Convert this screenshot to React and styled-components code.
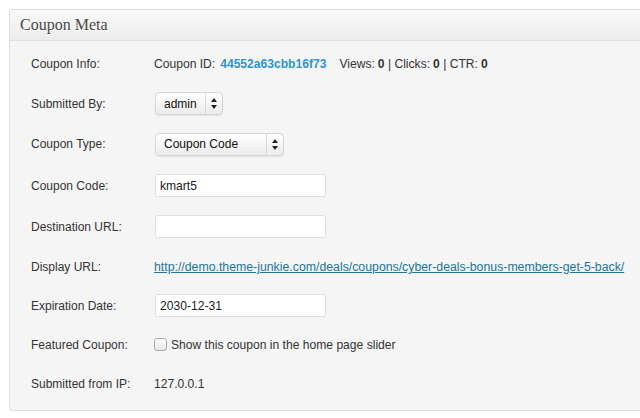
import React from 'react';
import styled, { createGlobalStyle } from 'styled-components';

const GlobalStyle = createGlobalStyle`
  html, body {
    margin: 0;
    padding: 0;
    background: #fff;
  }
  body {
    font-family: "Liberation Sans", Arial, sans-serif;
    font-size: 12px;
    color: #333;
  }
`;

const Page = styled.div`
  width: 640px;
  height: 418px;
  overflow: hidden;
  padding: 9px 0 0 9px;
  box-sizing: border-box;
`;

const Box = styled.div`
  width: 650px;
  border: 1px solid #dfdfdf;
  border-radius: 3px;
  background: #f5f5f5;
  box-shadow: inset 0 1px 0 #fff;
`;

const Header = styled.div`
  height: 30px;
  display: flex;
  align-items: center;
  padding-left: 10px;
  background: linear-gradient(to bottom, #f9f9f9, #ececec);
  border-bottom: 1px solid #dfdfdf;
  font-family: "Liberation Serif", Georgia, serif;
  font-size: 16px;
  color: #464646;
  text-shadow: 0 1px 0 #fff;
`;

const Body = styled.div`
  padding: 3px 0 8px 21px;
  display: flex;
  flex-direction: column;
`;

const Row = styled.div`
  display: grid;
  grid-template-columns: 123px 1fr;
  align-items: center;
  height: ${p => p.h}px;
`;

const Label = styled.div`
  color: #333;
`;

const Value = styled.div`
  display: flex;
  align-items: center;
  white-space: nowrap;
  font-size: 12.1px;
`;

const CouponId = styled.span`
  color: #2a95cf;
  font-weight: bold;
  margin-left: 5px;
  margin-right: 13px;
`;

const B = styled.b`
  margin-left: 3px;
`;

const Select = styled.div`
  display: flex;
  align-items: stretch;
  height: 23px;
  width: ${p => p.w}px;
  margin-left: 1px;
  border: 1px solid #d6d6d6;
  border-radius: 4px;
  background: linear-gradient(to bottom, #ffffff, #ececec);
  box-shadow: 0 1px 1px rgba(0, 0, 0, 0.08);
  box-sizing: border-box;
  color: #111;
  font-size: 12px;
`;

const SelectText = styled.div`
  flex: 1;
  display: flex;
  align-items: center;
  padding-left: 8px;
`;

const Arrows = styled.div`
  width: 16px;
  border-left: 1px solid #dadada;
  display: flex;
  align-items: center;
  justify-content: center;
`;

const Input = styled.div`
  width: 171px;
  height: 23px;
  margin-left: 1px;
  box-sizing: border-box;
  border: 1px solid #dfdfdf;
  border-radius: 3px;
  background: #fff;
  display: flex;
  align-items: center;
  padding-left: 4px;
  color: #222;
`;

const Link = styled.a`
  color: #21759b;
  text-decoration: underline;
  font-size: 12.3px;
`;

const Check = styled.span`
  width: 11px;
  height: 11px;
  border: 1px solid #aaa;
  border-radius: 3px;
  background: linear-gradient(to bottom, #fff, #e6e6e6);
  margin-right: 4px;
  margin-left: 0;
`;

const SelectArrows = () => (
  <svg width="6" height="11" viewBox="0 0 6 11">
    <path d="M3 0 L6 4 L0 4 Z M0 7 L6 7 L3 11 Z" fill="#222" />
  </svg>
);

const DropDown = ({ w, children }) => (
  <Select w={w}>
    <SelectText>{children}</SelectText>
    <Arrows>
      <SelectArrows />
    </Arrows>
  </Select>
);

export default function App() {
  return (
    <>
      <GlobalStyle />
      <Page>
        <Box>
          <Header>Coupon Meta</Header>
          <Body>
            <Row h={40}>
              <Label>Coupon Info:</Label>
              <Value>
                Coupon ID:<CouponId>44552a63cbb16f73</CouponId>
                Views:<B>0</B>&nbsp;|&nbsp;Clicks:<B>0</B>&nbsp;|&nbsp;CTR:<B>0</B>
              </Value>
            </Row>
            <Row h={39}>
              <Label>Submitted By:</Label>
              <Value>
                <DropDown w={68}>admin</DropDown>
              </Value>
            </Row>
            <Row h={42}>
              <Label>Coupon Type:</Label>
              <Value>
                <DropDown w={129}>Coupon Code</DropDown>
              </Value>
            </Row>
            <Row h={41}>
              <Label>Coupon Code:</Label>
              <Value>
                <Input>kmart5</Input>
              </Value>
            </Row>
            <Row h={41}>
              <Label>Destination URL:</Label>
              <Value>
                <Input />
              </Value>
            </Row>
            <Row h={40}>
              <Label>Display URL:</Label>
              <Value>
                <Link href="#">http://demo.theme-junkie.com/deals/coupons/cyber-deals-bonus-members-get-5-back/</Link>
              </Value>
            </Row>
            <Row h={37}>
              <Label>Expiration Date:</Label>
              <Value>
                <Input>2030-12-31</Input>
              </Value>
            </Row>
            <Row h={41}>
              <Label>Featured Coupon:</Label>
              <Value>
                <Check />
                Show this coupon in the home page slider
              </Value>
            </Row>
            <Row h={37}>
              <Label>Submitted from IP:</Label>
              <Value>127.0.0.1</Value>
            </Row>
          </Body>
        </Box>
      </Page>
    </>
  );
}
